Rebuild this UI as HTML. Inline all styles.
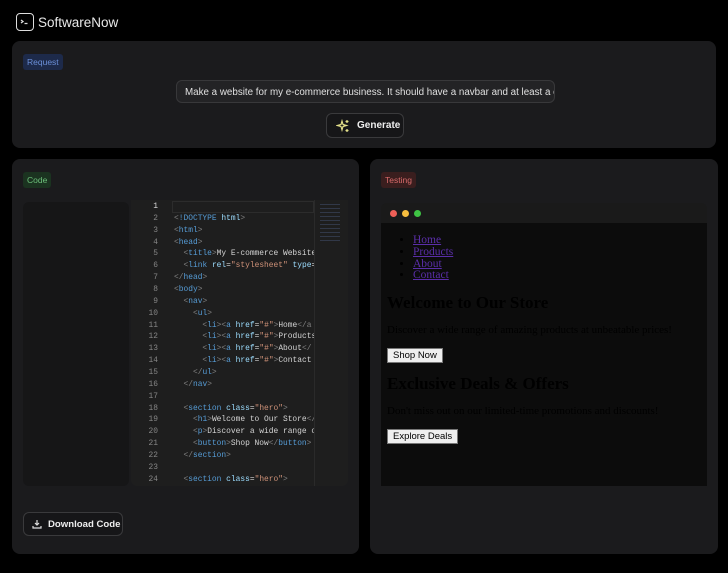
<!DOCTYPE html>
<html><head><meta charset="utf-8">
<style>
*{box-sizing:border-box;margin:0;padding:0}
body{width:728px;height:573px;background:#000;font-family:"Liberation Sans",sans-serif;position:relative;overflow:hidden;color:#ddd}
.abs{position:absolute}
.panel{position:absolute;background:#1b1b1d;border-radius:8px}
.tag{position:absolute;font-size:8.5px;padding:3px 4px;border-radius:3px}
.code{position:absolute;left:174px;top:201px;font-family:"Liberation Mono",monospace;font-size:7.9px;line-height:11.86px;color:#d4d4d4;white-space:pre;width:140px;overflow:hidden}
.nums{position:absolute;left:133px;top:201px;width:25px;text-align:right;font-family:"Liberation Mono",monospace;font-size:7.9px;line-height:11.86px;color:#858585;white-space:pre}
.t{color:#569cd6}.p{color:#808080}.a{color:#9cdcfe}.s{color:#ce9178}.w{color:#d4d4d4}
.btn{position:absolute;border:1px solid #3a3a3c;border-radius:6px;background:#161618;color:#eee;font-size:10px;font-weight:bold;display:flex;align-items:center;white-space:nowrap}
.prev{position:absolute;left:381px;top:223px;width:326px;height:263px;background:#0c0c0c;font-family:"Liberation Serif",serif;color:#000}
.prev a{color:#5a2ea8}
.pb{position:absolute;background:#efefef;border:1px solid #777;font-family:"Liberation Sans",sans-serif;font-size:9.5px;color:#000;padding:1px 5px}
</style></head><body>
<div class="abs" style="left:16px;top:13px;width:18px;height:18px;border:1.6px solid #ddd;border-radius:4px"></div>
<svg class="abs" style="left:16px;top:13px" width="18" height="18" viewBox="0 0 18 18" fill="none" stroke="#ddd" stroke-width="1.3"><path d="M5 7l2 1.5-2 1.5M8.5 10.5h3"/></svg>
<div class="abs" style="left:38px;top:15px;font-size:13.5px;color:#e8e8e8">SoftwareNow</div>

<div class="panel" style="left:12px;top:41px;width:704px;height:107px"></div>
<div class="tag" style="left:23px;top:54px;background:#1d2a4a;color:#6b8fd8">Request</div>
<div class="abs" style="left:176px;top:80px;width:379px;height:23px;background:#232325;border:1px solid #38383a;border-radius:6px;font-size:9.8px;color:#e0e0e0;padding:6px 0 0 8px;white-space:nowrap;overflow:hidden">Make a website for my e-commerce business. It should have a navbar and at least a co</div>
<div class="btn" style="left:326px;top:113px;width:78px;height:25px;padding-left:9px">
<svg width="14" height="14" viewBox="0 0 14 14" fill="none" stroke="#e3e08a" stroke-width="1.2"><path d="M6 2 L7 5.5 L10.5 6.5 L7 7.5 L6 11 L5 7.5 L1.5 6.5 L5 5.5Z"/><path d="M11 1v3M9.5 2.5h3M11 10v3M9.5 11.5h3"/></svg>
<span style="margin-left:7px">Generate</span></div>

<div class="panel" style="left:12px;top:159px;width:347px;height:395px"></div>
<div class="tag" style="left:23px;top:172px;background:#1b3320;color:#6cc07a">Code</div>
<div class="abs" style="left:23px;top:202px;width:106px;height:284px;background:#161617;border-radius:6px"></div>
<div class="abs" style="left:131px;top:200px;width:217px;height:286px;background:#1e1e1e;border-radius:0 0 6px 6px"></div>
<div class="abs" style="left:172px;top:201px;width:142px;height:12px;border:1px solid #2c2c2c"></div>
<div class="abs" style="left:314px;top:200px;width:1px;height:286px;background:#2a2a2a"></div>
<div class="abs" style="left:320px;top:204px;width:20px;height:38px;background:repeating-linear-gradient(#3e4a64 0 1px,transparent 1px 4px);opacity:.6"></div>
<div class="nums"><span style="color:#ddd">1</span>
2
3
4
5
6
7
8
9
10
11
12
13
14
15
16
17
18
19
20
21
22
23
24</div>
<div class="code">
<span class="p">&lt;</span><span class="t">!DOCTYPE</span> <span class="a">html</span><span class="p">&gt;</span>
<span class="p">&lt;</span><span class="t">html</span><span class="p">&gt;</span>
<span class="p">&lt;</span><span class="t">head</span><span class="p">&gt;</span>
  <span class="p">&lt;</span><span class="t">title</span><span class="p">&gt;</span>My E-commerce Website
  <span class="p">&lt;</span><span class="t">link</span> <span class="a">rel</span>=<span class="s">"stylesheet"</span> <span class="a">type</span>=
<span class="p">&lt;/</span><span class="t">head</span><span class="p">&gt;</span>
<span class="p">&lt;</span><span class="t">body</span><span class="p">&gt;</span>
  <span class="p">&lt;</span><span class="t">nav</span><span class="p">&gt;</span>
    <span class="p">&lt;</span><span class="t">ul</span><span class="p">&gt;</span>
      <span class="p">&lt;</span><span class="t">li</span><span class="p">&gt;&lt;</span><span class="t">a</span> <span class="a">href</span>=<span class="s">"#"</span><span class="p">&gt;</span>Home<span class="p">&lt;/a</span>
      <span class="p">&lt;</span><span class="t">li</span><span class="p">&gt;&lt;</span><span class="t">a</span> <span class="a">href</span>=<span class="s">"#"</span><span class="p">&gt;</span>Products
      <span class="p">&lt;</span><span class="t">li</span><span class="p">&gt;&lt;</span><span class="t">a</span> <span class="a">href</span>=<span class="s">"#"</span><span class="p">&gt;</span>About<span class="p">&lt;/</span>
      <span class="p">&lt;</span><span class="t">li</span><span class="p">&gt;&lt;</span><span class="t">a</span> <span class="a">href</span>=<span class="s">"#"</span><span class="p">&gt;</span>Contact
    <span class="p">&lt;/</span><span class="t">ul</span><span class="p">&gt;</span>
  <span class="p">&lt;/</span><span class="t">nav</span><span class="p">&gt;</span>

  <span class="p">&lt;</span><span class="t">section</span> <span class="a">class</span>=<span class="s">"hero"</span><span class="p">&gt;</span>
    <span class="p">&lt;</span><span class="t">h1</span><span class="p">&gt;</span>Welcome to Our Store<span class="p">&lt;/</span>
    <span class="p">&lt;</span><span class="t">p</span><span class="p">&gt;</span>Discover a wide range of
    <span class="p">&lt;</span><span class="t">button</span><span class="p">&gt;</span>Shop Now<span class="p">&lt;/</span><span class="t">button</span><span class="p">&gt;</span>
  <span class="p">&lt;/</span><span class="t">section</span><span class="p">&gt;</span>

  <span class="p">&lt;</span><span class="t">section</span> <span class="a">class</span>=<span class="s">"hero"</span><span class="p">&gt;</span></div>
<div class="btn" style="left:23px;top:512px;width:100px;height:24px;padding-left:8px;font-size:9.6px">
<svg width="10" height="10" viewBox="0 0 10 10" fill="none" stroke="#ddd" stroke-width="1.2"><path d="M5 1v5M3 4l2 2 2-2M1 7v2h8V7"/></svg>
<span style="margin-left:6px">Download Code</span></div>

<div class="panel" style="left:370px;top:159px;width:348px;height:395px"></div>
<div class="tag" style="left:381px;top:172px;background:#3a1e1e;color:#d86a6a">Testing</div>
<div class="abs" style="left:381px;top:203px;width:326px;height:21px;background:#1a1a1a;border-radius:6px 6px 0 0"></div>
<div class="abs" style="left:390px;top:210px;width:7px;height:7px;border-radius:50%;background:#ee5f57"></div>
<div class="abs" style="left:402px;top:210px;width:7px;height:7px;border-radius:50%;background:#f5bd3f"></div>
<div class="abs" style="left:414px;top:210px;width:7px;height:7px;border-radius:50%;background:#3ec444"></div>
<div class="prev">
<ul style="position:absolute;left:32px;top:12px;font-size:11.5px;line-height:11.8px;color:#000;list-style:disc">
<li><a href="#">Home</a></li><li><a href="#">Products</a></li><li><a href="#">About</a></li><li><a href="#">Contact</a></li></ul>
<div style="position:absolute;left:6px;top:70px;font-size:17px;font-weight:bold">Welcome to Our Store</div>
<div style="position:absolute;left:6px;top:101px;font-size:11px">Discover a wide range of amazing products at unbeatable prices!</div>
<div class="pb" style="left:6px;top:125px">Shop Now</div>
<div style="position:absolute;left:6px;top:151px;font-size:17px;font-weight:bold">Exclusive Deals &amp; Offers</div>
<div style="position:absolute;left:6px;top:182px;font-size:11px">Don't miss out on our limited-time promotions and discounts!</div>
<div class="pb" style="left:6px;top:206px">Explore Deals</div>
</div>
</body></html>
